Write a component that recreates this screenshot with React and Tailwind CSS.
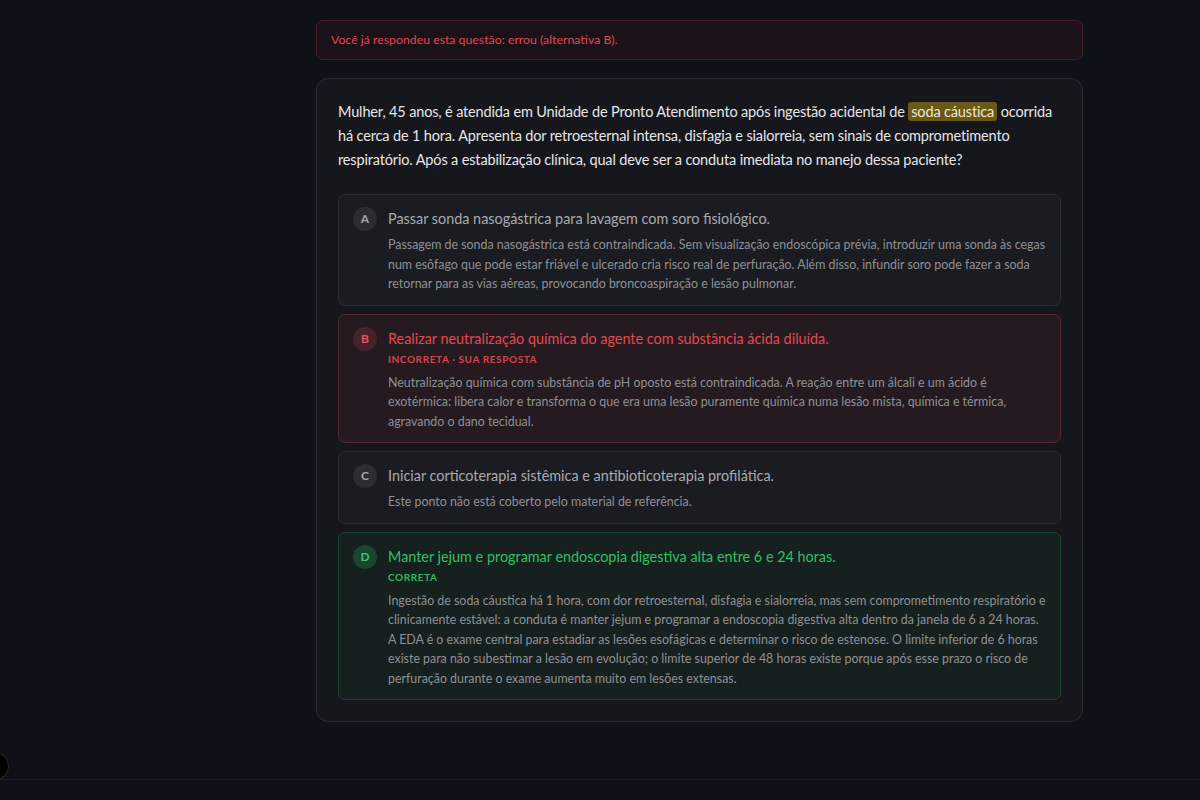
import React from 'react';

const options = [
  {
    letter: 'A',
    tone: 'neutral',
    title: 'Passar sonda nasogástrica para lavagem com soro fisiológico.',
    text: 'Passagem de sonda nasogástrica está contraindicada. Sem visualização endoscópica prévia, introduzir uma sonda às cegas num esôfago que pode estar friável e ulcerado cria risco real de perfuração. Além disso, infundir soro pode fazer a soda retornar para as vias aéreas, provocando broncoaspiração e lesão pulmonar.',
  },
  {
    letter: 'B',
    tone: 'wrong',
    title: 'Realizar neutralização química do agente com substância ácida diluída.',
    label: 'Incorreta · Sua resposta',
    text: 'Neutralização química com substância de pH oposto está contraindicada. A reação entre um álcali e um ácido é exotérmica: libera calor e transforma o que era uma lesão puramente química numa lesão mista, química e térmica, agravando o dano tecidual.',
  },
  {
    letter: 'C',
    tone: 'neutral',
    title: 'Iniciar corticoterapia sistêmica e antibioticoterapia profilática.',
    text: 'Este ponto não está coberto pelo material de referência.',
  },
  {
    letter: 'D',
    tone: 'right',
    title: 'Manter jejum e programar endoscopia digestiva alta entre 6 e 24 horas.',
    label: 'Correta',
    text: 'Ingestão de soda cáustica há 1 hora, com dor retroesternal, disfagia e sialorreia, mas sem comprometimento respiratório e clinicamente estável: a conduta é manter jejum e programar a endoscopia digestiva alta dentro da janela de 6 a 24 horas. A EDA é o exame central para estadiar as lesões esofágicas e determinar o risco de estenose. O limite inferior de 6 horas existe para não subestimar a lesão em evolução; o limite superior de 48 horas existe porque após esse prazo o risco de perfuração durante o exame aumenta muito em lesões extensas.',
  },
];

const tones = {
  neutral: {
    box: 'border-[#2a2c33] bg-[#1b1c21]',
    dot: 'bg-[#2c2d33] text-[#a3a4a9]',
    title: 'text-[#a9aaae]',
    label: '',
  },
  wrong: {
    box: 'border-[#55262c] bg-[#251a1f]',
    dot: 'bg-[#48222a] text-[#e25258]',
    title: 'text-[#e24a50]',
    label: 'text-[#dc4449]',
  },
  right: {
    box: 'border-[#1d4631] bg-[#16201e]',
    dot: 'bg-[#1b4530] text-[#34c46a]',
    title: 'text-[#2fc163]',
    label: 'text-[#2cbc5e]',
  },
};

const Option = ({ o }) => {
  const t = tones[o.tone];
  return (
    <div className={`flex gap-[11px] rounded-[7px] border px-[14px] pt-[12px] pb-[11px] ${t.box}`}>
      <span className={`flex h-[24px] w-[24px] shrink-0 items-center justify-center rounded-full text-[12px] font-bold ${t.dot}`}>
        {o.letter}
      </span>
      <div className="min-w-0 flex-1">
        <div className={`text-[14.4px] leading-[24px] ${t.title}`}>{o.title}</div>
        {o.label && (
          <div className={`text-[10px] font-bold uppercase leading-[17px] tracking-[0.06em] ${t.label}`}>{o.label}</div>
        )}
        <p className={`${o.label ? 'mt-[5px]' : 'mt-[4px]'} text-[12.4px] leading-[19.5px] text-[#8f9095]`}>{o.text}</p>
      </div>
    </div>
  );
};

export default function App() {
  return (
    <div className="relative min-h-[800px] overflow-hidden bg-[#0f1119]" style={{ fontFamily: 'Lato, "Noto Sans", sans-serif' }}>
      <div className="ml-[316px] w-[767px] pt-[20px] pb-[56px]">
        <div className="rounded-[7px] border border-[#4a2027] bg-[#1a1218] px-[14px] py-[10px] text-[12.3px] leading-[18px] text-[#e0474d]">
          Você já respondeu esta questão: errou (alternativa B).
        </div>

        <div className="mt-[18px] rounded-[12px] border border-[#2a2c33] bg-[#16171c] px-[21px] pt-[21px] pb-[21px]">
          <p className="text-[14.5px] leading-[24px] tracking-[-0.15px] text-[#e6e6e9]">
            Mulher, 45 anos, é atendida em Unidade de Pronto Atendimento após ingestão acidental de{' '}
            <span className="rounded-[3px] bg-[#6a5819] px-[3px] py-[1px] text-[#efe7cf]">soda cáustica</span> ocorrida
            há cerca de 1 hora. Apresenta dor retroesternal intensa, disfagia e sialorreia, sem sinais de comprometimento
            respiratório. Após a estabilização clínica, qual deve ser a conduta imediata no manejo dessa paciente?
          </p>

          <div className="mt-[22px] flex flex-col gap-[8px]">
            {options.map((o) => (
              <Option key={o.letter} o={o} />
            ))}
          </div>
        </div>
      </div>

      <div className="absolute bottom-0 left-0 right-0 h-[21px] border-t border-[#1e2027] bg-[#0f1119]" />
      <div className="absolute left-[-19px] top-[752px] h-[28px] w-[28px] rounded-full border border-[#2a2c33] bg-black" />
    </div>
  );
}
